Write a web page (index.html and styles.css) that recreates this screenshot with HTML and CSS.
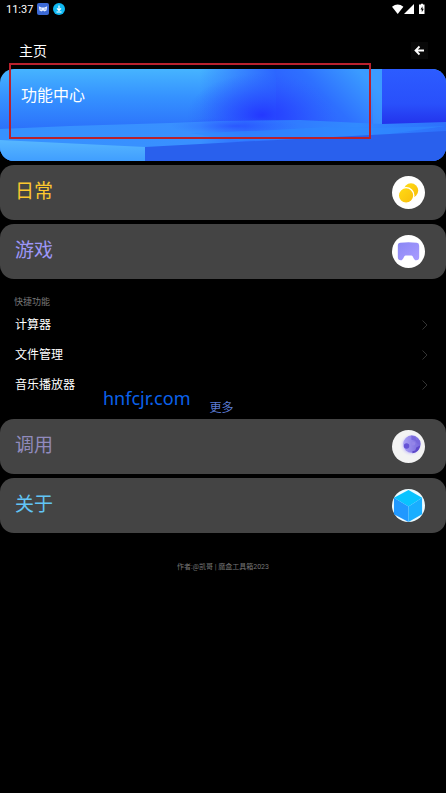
FILE: index.html
```html
<!DOCTYPE html>
<html lang="zh-CN">
<head>
<meta charset="utf-8">
<meta name="viewport" content="width=device-width, initial-scale=1">
<title>主页</title>
<link rel="stylesheet" href="styles.css">
</head>
<body>
<div class="status">
  <span class="time">11:37</span>
  <svg class="app-icon" viewBox="0 0 12 12" aria-hidden="true"><rect width="12" height="12" rx="2" fill="#3b69d5"/><path d="M1.8 3.2 4.5 4.5h3l2.7-1.3-.7 4.2-2 1.2L6 7.4 4.5 8.600 2.500 7.400Z" fill="#e4edff"/><path d="M4 5.500v1.200M8 5.500v1.200" stroke="#3b69d5" stroke-width=".8"/></svg>
  <svg class="app-icon" viewBox="0 0 12 12" aria-hidden="true"><circle cx="6" cy="6" r="6" fill="#10b9f3"/><path d="M6 2.500v4.500M4 5.300l2 2 2-2M3.500 9h5" fill="none" stroke="#fff" stroke-width="1.200"/></svg>
  <svg class="signals" viewBox="0 0 34 12" aria-hidden="true"><path d="M0 3.800Q5.700-.8 11.400 3.800L5.700 11Z" fill="#fff"/><path d="M22 1v10H12Z" fill="#fff"/><path d="M28 1.500h1V.8h2v.7h1.500V11H27V1.500Z" fill="#fff"/><path d="M30.500 3.200 28.500 6.500h1.300v2.700l2-3.500h-1.300Z" fill="#000"/></svg>
</div>
<header class="topbar">
  <h1>主页</h1>
  <button class="back" type="button" aria-label="返回"><svg viewBox="0 0 17 17" aria-hidden="true"><path d="M13 8.500H4.800M8.500 4.500l-4 4 4 4" fill="none" stroke="#fff" stroke-width="1.800"/></svg></button>
</header>
<main class="stack">
  <section class="banner">
    <svg class="scene" viewBox="0 0 446 92" preserveAspectRatio="none" aria-hidden="true">
      <defs>
        <linearGradient id="wall" x1="0" y1="0" x2="0" y2="1"><stop offset="0" stop-color="#46b4ff"/><stop offset=".3" stop-color="#3592ff"/><stop offset=".65" stop-color="#2c72fb"/><stop offset="1" stop-color="#2b68fb"/></linearGradient>
        <linearGradient id="mid" x1="0" y1="0" x2="1" y2="0"><stop offset="0" stop-color="#2c5cff" stop-opacity="0"/><stop offset="1" stop-color="#2c66ff"/></linearGradient>
        <linearGradient id="right" gradientUnits="userSpaceOnUse" x1="290" y1="50" x2="350" y2="-8"><stop offset="0" stop-color="#2c5aff"/><stop offset=".5" stop-color="#2e70ff"/><stop offset="1" stop-color="#3b9cff"/></linearGradient>
        <linearGradient id="end" x1="0" y1="0" x2="0" y2="1"><stop offset="0" stop-color="#2c5cff"/><stop offset=".6" stop-color="#2950fb"/><stop offset="1" stop-color="#222fea"/></linearGradient>
        <linearGradient id="floor" x1="0" y1="0" x2="1" y2="0"><stop offset="0" stop-color="#3691ff"/><stop offset=".45" stop-color="#3990ff"/><stop offset=".55" stop-color="#2f70ff"/><stop offset=".8" stop-color="#318aff"/><stop offset="1" stop-color="#2d70fb"/></linearGradient>
        <linearGradient id="low" x1="0" y1="0" x2="0" y2="1"><stop offset="0" stop-color="#57b7ff"/><stop offset="1" stop-color="#409eff"/></linearGradient>
        <radialGradient id="shade"><stop offset="0" stop-color="#2438ff"/><stop offset=".5" stop-color="#2848ff" stop-opacity=".5"/><stop offset="1" stop-color="#2c5cff" stop-opacity="0"/></radialGradient>
      </defs>
      <rect width="446" height="92" fill="url(#wall)"/>
      <rect x="200" width="76" height="56" fill="url(#mid)"/>
      <rect x="276" width="106" height="56" fill="url(#right)"/>
      <ellipse cx="262" cy="46" rx="75" ry="42" fill="url(#shade)"/>
      <rect x="373" width="9" height="56" fill="#3f9dff" opacity=".35"/>
      <rect x="382" width="64" height="58" fill="url(#end)"/>
      <path d="M0 60 70 57 170 54 220 52 300 51 382 55 446 53V92H0Z" fill="url(#floor)"/>
      <ellipse cx="235" cy="57" rx="65" ry="9" fill="url(#shade)" opacity=".5"/>
      <path d="M190 64Q270 62 325 58 360 60 446 57L382 66 240 72Z" fill="#2f89ff" opacity=".65"/>
      <path d="M145 78 446 62V92H145Z" fill="#2960ed"/>
      <path d="M0 71 145 78V92H0Z" fill="url(#low)"/>
    </svg>
    <h2>功能中心</h2>
    <div class="marker"></div>
  </section>
  <a class="card daily" href="#daily"><span>日常</span>
    <svg viewBox="0 0 34 34" aria-hidden="true"><defs><linearGradient id="coin" x1="0" y1="0" x2="1" y2="1"><stop offset="0" stop-color="#ffdc16"/><stop offset="1" stop-color="#f8bd0b"/></linearGradient></defs><circle cx="17" cy="17" r="17" fill="#fff"/><circle cx="19.500" cy="15" r="7.500" fill="url(#coin)"/><circle cx="14.500" cy="20" r="8" fill="url(#coin)" stroke="#fff" stroke-width="1.400"/></svg></a>
  <a class="card games" href="#games"><span>游戏</span>
    <svg viewBox="0 0 34 34" aria-hidden="true"><defs><linearGradient id="pad" x1="0" y1="0" x2="1" y2="1"><stop offset="0" stop-color="#8a87f5"/><stop offset="1" stop-color="#a99bff"/></linearGradient></defs><circle cx="17" cy="17" r="17" fill="#fff"/><path d="M8.500 8Q17 6.800 25.500 8 28 8.200 28 11V23Q28 26 25 26C22 26 22 21 20 21H14C12 21 12 26 9 26Q6 26 6 23V11Q6 8.200 8.500 8Z" fill="url(#pad)"/></svg></a>
  <section class="quick">
    <h3>快捷功能</h3>
    <a class="row" href="#calculator">计算器<svg viewBox="0 0 6 10" aria-hidden="true"><path d="m.5.5 4.500 4.500-4.500 4.500"/></svg></a>
    <a class="row" href="#files">文件管理<svg viewBox="0 0 6 10" aria-hidden="true"><path d="m.5.5 4.500 4.500-4.500 4.500"/></svg></a>
    <a class="row" href="#music">音乐播放器<svg viewBox="0 0 6 10" aria-hidden="true"><path d="m.5.5 4.500 4.500-4.500 4.500"/></svg></a>
    <a class="more" href="#more">更多</a>
    <span class="site">hnfcjr.com</span>
  </section>
  <a class="card calls" href="#calls"><span>调用</span>
    <svg viewBox="0 0 34 34" aria-hidden="true"><defs><linearGradient id="moon"><stop offset="0" stop-color="#aaa0f4"/><stop offset="1" stop-color="#7565dc"/></linearGradient><radialGradient id="halo"><stop offset=".6" stop-color="#c9c2fa"/><stop offset="1" stop-color="#f3f3f3" stop-opacity="0"/></radialGradient></defs><circle cx="17" cy="17" r="17" fill="#f3f3f3"/><circle cx="19.500" cy="15.500" r="12" fill="url(#halo)"/><circle cx="20.500" cy="14.500" r="9" fill="url(#moon)"/><circle cx="15" cy="16.500" r="2.800" fill="#6552d5"/><path d="m20 6 4 1 1 3 4 1v4l-3-1-2-3-4-1Z" fill="#7868dc"/><path d="M29 16q-1 7-8 8v-2l3-1 1-3Z" fill="#5e49c9"/><circle cx="22" cy="14" r="2" fill="#9485e8"/></svg></a>
  <a class="card about" href="#about"><span>关于</span>
    <svg viewBox="0 0 34 34" aria-hidden="true"><circle cx="17" cy="17" r="17" fill="#edfbff"/><path d="M17 1 31 9 17 18 2 9Z" fill="#08c3ff"/><path d="M2 9 17 18V34L2 26Z" fill="#2098ff"/><path d="M31 9V26L17 34V18Z" fill="#19aeff"/></svg></a>
</main>
<footer>作者:@凯哥 | 魔盒工具箱2023</footer>
</body>
</html>
```
FILE: styles.css
```css
* { box-sizing: border-box; }
body {
  margin: 0;
  min-height: 100vh;
  background: #000;
  color: #fff;
  font-family: Roboto, "Noto Sans CJK SC", sans-serif;
}
a { color: inherit; text-decoration: none; }
h1, h2, h3 { margin: 0; font-weight: 400; }
svg { display: block; flex: none; }

.status {
  display: flex;
  align-items: center;
  gap: 4px;
  height: 18px;
  padding: 0 20px 0 6px;
}
.time { width: 27px; padding-top: 1px; font-size: 11px; line-height: 18px; }
.app-icon { width: 12px; height: 12px; }
.signals { width: 34px; height: 12px; margin-left: auto; }

.topbar {
  display: flex;
  align-items: center;
  justify-content: space-between;
  height: 51px;
  padding: 14px 18px 0 19px;
}
.topbar h1 { font-size: 14px; line-height: 20px; }
.back { padding: 0; border: 0; background: #080808; }
.back svg { width: 17px; height: 17px; }

.stack { display: flex; flex-direction: column; gap: 4px; }
.banner {
  position: relative;
  height: 92px;
  padding: 15px 21px;
}
.scene {
  position: absolute;
  inset: 0;
  width: 100%;
  height: 100%;
  border-radius: 14px;
}
.banner h2 { position: relative; font-size: 16px; line-height: 24px; }
.marker {
  position: absolute;
  top: -6px;
  left: 9px;
  right: 75px;
  height: 76px;
  border: 2px solid #b9212d;
}

.card {
  display: flex;
  justify-content: space-between;
  align-items: center;
  height: 55px;
  padding: 0 21px 0 15px;
  border-radius: 14px;
  background: #444;
}
.card span { padding-bottom: 2px; font-size: 19px; line-height: 28px; }
.card svg { width: 33px; height: 33px; }
.daily { color: #fbc72f; }
.games { color: #9d97f8; }
.calls { color: #918bbd; }
.about { color: #62c4f5; }

.quick {
  position: relative;
  display: flex;
  flex-direction: column;
  padding: 11px 18px 8px 15px;
}
.quick h3 { margin-left: -1px; color: #777; font-size: 9px; line-height: 16px; }
.row {
  display: flex;
  align-items: center;
  justify-content: space-between;
  font-size: 12px;
  line-height: 30px;
}
.row svg { width: 6px; height: 10px; fill: none; stroke: #333; stroke-width: 1; }
.more {
  align-self: center;
  color: #5b7bd2;
  font-size: 12px;
  line-height: 16px;
}
.site {
  position: absolute;
  top: 103px;
  left: 103px;
  color: #0b62ec;
  font-family: "Noto Sans", sans-serif;
  font-size: 18px;
  line-height: 24px;
}
.quick { height: 132px; }
footer {
  padding-top: 26px;
  color: #777;
  font-size: 7px;
  line-height: 16px;
  text-align: center;
}
```
